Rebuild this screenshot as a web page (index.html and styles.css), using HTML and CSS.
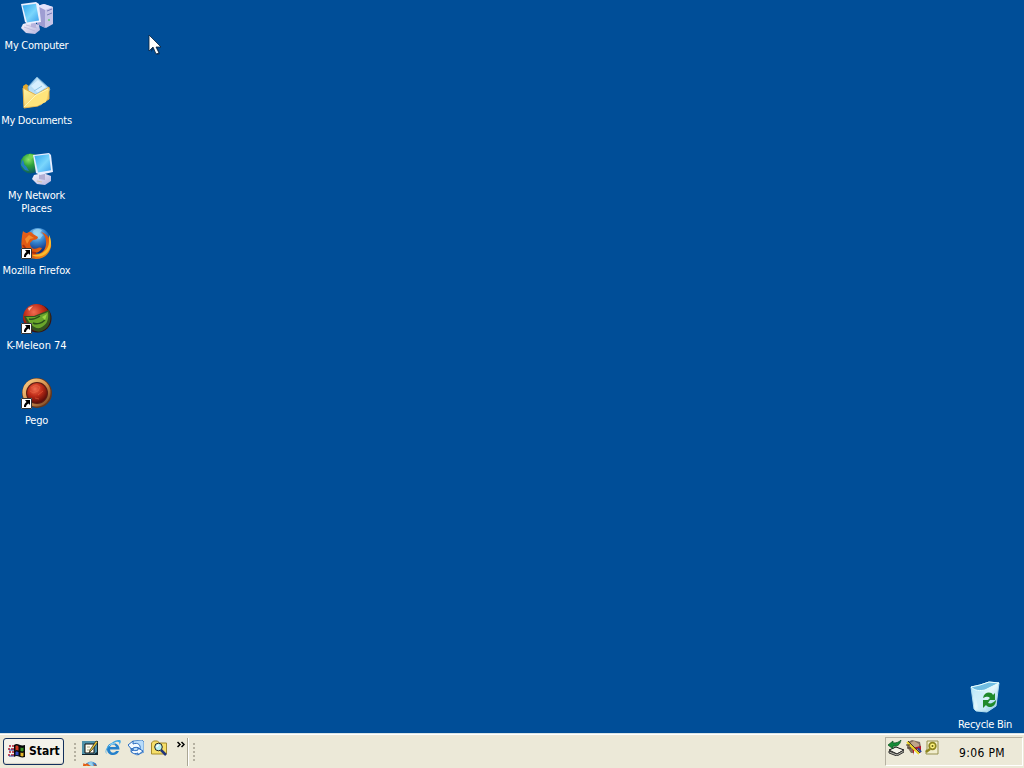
FILE: index.html
```html
<!DOCTYPE html>
<html lang="en">
<head>
<meta charset="utf-8">
<title>Desktop</title>
<link rel="stylesheet" href="styles.css">
</head>
<body>
<svg width="0" height="0" class="defs" aria-hidden="true">
<defs>
<linearGradient id="screen" x1="0" y1="0" x2="1" y2="1"><stop offset="0" stop-color="#2fa6ee"/><stop offset=".55" stop-color="#7ad6fc"/><stop offset="1" stop-color="#3ca0ec"/></linearGradient>
<linearGradient id="case" x1="0" y1="0" x2="1" y2="1"><stop offset="0" stop-color="#fbfaff"/><stop offset="1" stop-color="#b3b0dc"/></linearGradient>
<linearGradient id="folder" x1="0" y1="0" x2="1" y2="1"><stop offset="0" stop-color="#fff6a8"/><stop offset="1" stop-color="#f3c04c"/></linearGradient>
<radialGradient id="earth" cx=".4" cy=".3" r=".7"><stop offset="0" stop-color="#8be36b"/><stop offset=".45" stop-color="#2fa43b"/><stop offset="1" stop-color="#0b5c60"/></radialGradient>
<radialGradient id="ocean" cx=".45" cy=".25" r=".7"><stop offset="0" stop-color="#a8e2ff"/><stop offset=".5" stop-color="#3180cc"/><stop offset="1" stop-color="#112b78"/></radialGradient>
<linearGradient id="fox" x1="0" y1="0" x2="1" y2="1"><stop offset="0" stop-color="#e4601a"/><stop offset=".55" stop-color="#dc560f"/><stop offset="1" stop-color="#f59a20"/></linearGradient>
<radialGradient id="redball" cx=".4" cy=".3" r=".7"><stop offset="0" stop-color="#f06d50"/><stop offset=".5" stop-color="#bf2c18"/><stop offset="1" stop-color="#5d0c08"/></radialGradient>
<linearGradient id="gold" x1="0" y1="0" x2="1" y2="1"><stop offset="0" stop-color="#ffd68e"/><stop offset=".5" stop-color="#d89451"/><stop offset="1" stop-color="#69391d"/></linearGradient>
<linearGradient id="bin" x1="0" y1="0" x2="1" y2="1"><stop offset="0" stop-color="#a5dff8"/><stop offset=".5" stop-color="#e4f7fb"/><stop offset="1" stop-color="#82c6e8"/></linearGradient>
<symbol id="shortcut" viewBox="0 0 11 11"><path fill="#fff" d="M0 0h11v11H0z"/><path fill="none" stroke="#000" stroke-width=".8" d="M.5.5h10v10H.5z"/><path d="M4 2h5v5L7.500 5.500C6 6.500 5 7.500 5 9H3c-.3-2 .8-3.800 2.500-5z"/></symbol>
<symbol id="firefox" viewBox="0 0 32 32"><circle cx="18" cy="13.500" r="12.500" fill="url(#ocean)"/><path d="M13 4c3-3 7-2 9-1l-2 3 3 2-3 4-4-1-2-3z" fill="#9ad6ef" opacity=".75"/><path d="M3 4c1.500 1.500 3 2 4 2 3-2 5-1 6 1l5 3c0 2-2 3-5 3l-3 3c0 5 4 7 8 5 2-1 3 0 4 0-2 4-6 6-10 4 7 5 15-1 14-11-.3-4-2-7-5-9 7 2 11 9 10 15-2 8-8 12-15 12C6 31 .5 24 1.500 15 1.800 11 2 8 3 4z" fill="url(#fox)"/><path d="M29 8c4 7 2 16-5 20-4 2-9 2-12 0 9 1 17-5 17-13z" fill="#fabc2d"/><path d="M5 12l4-4 5 3-4 1-3 5z" fill="#f38c2c"/><path d="M3 18c3 5 7 8 13 8" stroke="#ae300c" stroke-width="2" fill="none"/></symbol>
</defs>
</svg>
<main class="desktop">
<div class="icons">
<div class="item"><svg class="icon" viewBox="0 0 32 32"><path d="M17 4l7-2 9 3v17l-7 4-9-4z" fill="#c6c4e8"/><path d="M17 4l7-2 9 3-8 3z" fill="#e6e4fb"/><path d="M17 4l8 4v18l-8-4z" fill="#9f9dd2"/><path d="M27 9l5-2M27 13l5-2" stroke="#7779b7"/><circle cx="29" cy="18" r="1" fill="#64c977"/><path d="M1 26l2-4 7-2 9 3 1 5-5 4-9-1z" fill="url(#case)"/><path d="M4 25l11 4M6 23l11 3" stroke="#b6b3d6" stroke-width=".7"/><path d="M11 20h5v6l-5-1z" fill="#b8b4dc"/><path d="M1 2L16 0l3 2 2 18-13 2-3-2z" fill="#edf1ff"/><path d="M2.500 3.500L16 1.800l3 16.700-12 2z" fill="url(#screen)"/></svg><span class="label my-computer">My Computer</span></div>
<div class="item"><svg class="icon" viewBox="0 0 32 32"><path d="M3 9l3-2 3 2 6 1v19L4 31z" fill="#e4a92d"/><path d="M8 10L17 0l13 12-9 16-11-2z" fill="#b7dcf4" stroke="#79b0d7"/><path d="M11 9l7-6 8 7-8 6z" fill="#d7effe"/><path d="M14 14l8-5M16 17l9-5" stroke="#8fc4e5"/><path d="M3 11l13 7L29 10v12L18 29 4 31z" fill="url(#folder)" stroke="#e3b04a"/><path d="M4 30l12-12 13-6-3 13-9 4z" fill="#ffe47b"/><path d="M4 30l12-12 12-6" fill="none" stroke="#fff7b7"/></svg><span class="label my-documents">My Documents</span></div>
<div class="item"><svg class="icon" viewBox="0 0 32 32"><circle cx="10.500" cy="11.500" r="10" fill="url(#earth)"/><path d="M2 8c3 1 1 5 4 6l3 5-4-1-4-5z" fill="#237ec0"/><path d="M9 2l6 1-3 4-4-1z" fill="#75d354"/><path d="M12 27l2-4 9-2 8 3v5l-6 4-8-1z" fill="url(#case)"/><path d="M19 20h6v8l-6-1z" fill="#b3afd3"/><path d="M13 3L29 1l2 2 2 17-13 3-4-2z" fill="#e5edff"/><path d="M14.500 4L29 2.200l2 16-13 2.300z" fill="url(#screen)"/><path d="M17 29l5 1" stroke="#d3c5a7"/></svg><span class="label my-network">My Network<br>Places</span></div>
<div class="item"><svg class="icon" viewBox="0 0 32 32"><use href="#firefox" width="32" height="32"/><use href="#shortcut" x="1" y="21" width="11" height="11"/></svg><span class="label firefox">Mozilla Firefox</span></div>
<div class="item"><svg class="icon" viewBox="0 0 32 32"><circle cx="17.500" cy="16.500" r="14" fill="#39100e"/><circle cx="16.500" cy="15.500" r="13.500" fill="url(#redball)"/><path d="M4 14l10 0 15-6c3 8 2 17-7 21-8 3-15-5-18-15z" fill="#335320"/><path d="M6 15l9 0 13-5c1 8-1 13-8 16-6 1-10-4-14-11z" fill="#69a52b"/><path d="M9 17c4 1 8-1 11-3m-7 7c4 2 9 0 12-3" fill="none" stroke="#294f1b" stroke-width="1.500"/><path d="M22 15l5-3-2 6z" fill="#9cd443"/><path d="M8 6l5-2-4 5z" fill="#ffb399"/><use href="#shortcut" x="1" y="21" width="11" height="11"/></svg><span class="label kmeleon">K-Meleon 74</span></div>
<div class="item"><svg class="icon" viewBox="0 0 32 32"><circle cx="17" cy="16" r="15" fill="#65371e"/><circle cx="16.500" cy="15.500" r="14" fill="url(#gold)"/><circle cx="17" cy="16" r="11" fill="#5b1c14"/><circle cx="17" cy="16" r="10" fill="url(#redball)"/><path d="M11 11l5-3 4 2-2 4-5 2-3-2m8 4l5-4m-8 7l4 1" stroke="#f06b46" fill="none" opacity=".5"/><use href="#shortcut" x="1" y="21" width="11" height="11"/></svg><span class="label pego">Pego</span></div>
</div>
<div class="item recycle"><svg class="icon" viewBox="0 0 32 32"><path d="M2 6l9-2 9-3 10 1-3 23-9 6-11-1-2-2z" fill="url(#bin)" stroke="#b0ddef"/><path d="M2 6c4 4 9 4 14 3l14-7-10-1-9 3z" fill="#70bde2" stroke="#e9ffff"/><path d="M6 11l3 16 8 2-2-17z" fill="#c9edf8" opacity=".7"/><path d="M14 17c1-6 8-7 10-3l2-2v7h-7l2-2c-2-2-4-1-7 0zM27 19c0 7-7 9-10 5l-3 3v-8h7l-2 3c3 1 5 0 8-3z" fill="#208a2b"/></svg><span class="label recycle-bin">Recycle Bin</span></div>
<svg class="cursor" viewBox="0 0 14 22"><path d="M3 4l10 9H9l3 7-3 1-3-6-3 3z" fill="#05264b" opacity=".65"/><path d="M1 1v16l4-4 3 7 3-1-3-6h5z" fill="#fff" stroke="#09213b" stroke-width=".8"/></svg>
</main>
<footer class="taskbar">
<button class="start"><svg class="flag" viewBox="0 0 18 16"><path d="M1 3h2m1 0h2M0 6h2m1 0h3M1 9h2m1 0h2M0 12h2m1 0h3" stroke="#b21b32" stroke-width="1.500"/><path d="M1 7h5M1 13h5" stroke="#2636a0"/><path d="M6 2c4-3 6 2 11 0v12c-5 2-7-3-11 0z" fill="#080808"/><path d="M7.500 3c2-1 2 0 3 .5v4c-1.500-.5-1.500-1-3 0z" fill="#d43b20"/><path d="M12.500 4.500c1.500.5 2 .5 3 0v3.500c-1 .5-1.500.5-3 0z" fill="#3a9627"/><path d="M7.500 9c1.500-1 2 0 3 0v3.500c-1-.5-1.500-1-3 0z" fill="#314bc4"/><path d="M12.500 9.500c1.500.5 2 .5 3 0V13c-1 .5-1.500.5-3 0z" fill="#e5b82a"/></svg><span>Start</span></button>
<div class="grip"></div>
<div class="launch">
<div class="quick">
<svg viewBox="0 0 16 16"><path d="M0 1h16v14H0z" fill="#11242c"/><path d="M0 1h15v11l-3 2H0z" fill="#4f91a9"/><path d="M3 4h9v9H3z" fill="#fffef2" stroke="#111"/><path d="M5 7h3m-3 3h3" stroke="#aaa782"/><path d="M8 10l6-9 2 1-6 8-3 3z" fill="#f0ca31" stroke="#222" stroke-width=".7"/></svg>
<svg viewBox="0 0 16 16"><path d="M14.500 9.500H5c.5 4 4.500 4 6 1.500h3C12 17 2 16.500 2 9 2 1 14.500.5 14.500 9.500zM5 7h6c-.5-3.500-5.500-3.500-6 0z" fill="#2581cb"/><path d="M2 14C-3 11 6 1 13 0c4-1 3 3 1 5 1-2 0-4-3-3C5 4-1 11 2 14z" fill="#42a9e5"/><path d="M4 6c2-2 4-3 6-2" stroke="#a2e4ff" fill="none"/></svg>
<svg viewBox="0 0 16 16"><path d="M5 1l9-1 2 2v10l-7 3-6-3V8z" fill="#b8dcfa" stroke="#5d92ce"/><path d="M0 5l5-4v3c5-2 8 1 7 5-2-2-4-2-7-1v3zM15 11l-5 4v-2c-5 2-8-1-6-5 1 3 3 3 6 2V8z" fill="#f3faff" stroke="#2769bd"/></svg>
<svg viewBox="0 0 16 16"><path d="M.5 3l2-2h4l2 2h7v11H.5z" fill="#f6df69" stroke="#a58c2b"/><circle cx="7.500" cy="7" r="3.800" fill="#b9f1ef" stroke="#222"/><path d="M10 10l5 5" stroke="#21357b" stroke-width="2.500"/><path d="M5.500 7l2-2" stroke="#fff" stroke-width="1.500"/></svg>
</div>
<div class="overflow"><svg viewBox="0 0 16 16"><use href="#firefox" width="16" height="16"/></svg></div>
</div>
<svg class="chevron" viewBox="0 0 8 7"><path d="M.5 1l2.500 2.500-2.500 2.500M4.500 1L7 3.500 4.500 6" fill="none" stroke="#000" stroke-width="1.500"/></svg>
<div class="divider"></div>
<div class="grip second"></div>
<div class="tray">
<div class="tray-icons">
<svg viewBox="0 0 16 16"><path d="M1 10l7-3 8 3-7 4z" fill="#f4f3ea" stroke="#111"/><path d="M1 11v2l8 3 7-4v-2l-7 4z" fill="#b9b9af" stroke="#333"/><path d="M0 5l5-4v2c4 0 6-1 8-3-1 5-4 7-8 6v3z" fill="#168c38" stroke="#0a4a1c" stroke-width=".7"/></svg>
<svg viewBox="0 0 16 16"><path d="M2 2l4-2 8 2 1 5-2 6H5L1 7z" fill="#806e60"/><path d="M4 3l4-2 5 3v4H7z" fill="#c0a589"/><path d="M6 8l9-2v9H8z" fill="#b5162b"/><path d="M8 11l3-2 4 4v2H8z" fill="#eee"/><path d="M12 8l3 4" stroke="#24469b" stroke-width="2"/><path d="M1 2l12 12" stroke="#edd426" stroke-width="2"/><path d="M2 1l12 12M0 5h4M1 8h4" stroke="#473b24"/></svg>
<svg viewBox="0 0 16 16"><path d="M3 1h11v13H2v-3l1-2z" fill="#f1edcd" stroke="#96914f"/><circle cx="8.500" cy="6" r="3.300" fill="#fff480" stroke="#8d851d" stroke-width="1.700"/><circle cx="8.500" cy="6" r="1" fill="#625f16"/><path d="M6 9l-4 3" stroke="#8e861d" stroke-width="2.500"/></svg>
</div>
<time>9:06 PM</time>
</div>
</footer>
</body>
</html>
```

FILE: styles.css
```css
* { box-sizing: border-box; }
body {
  margin: 0;
  width: 1024px;
  height: 768px;
  display: flex;
  flex-direction: column;
  overflow: hidden;
  background: #004e98;
  font-family: "DejaVu Sans Condensed", "DejaVu Sans", sans-serif;
  font-size: 11px;
  color: #000;
}
svg { display: block; flex-shrink: 0; }
.defs { position: absolute; }
.desktop {
  position: relative;
  height: 733px;
  display: flex;
  justify-content: space-between;
  align-items: flex-end;
}
.icons { align-self: flex-start; }
.item {
  width: 73px;
  height: 75px;
  padding-top: 2px;
  display: flex;
  flex-direction: column;
  align-items: center;
}
.icon { width: 32px; height: 32px; margin-right: 1px; overflow: visible; }
.label {
  margin-top: 5px;
  line-height: 13px;
  text-align: center;
  white-space: nowrap;
  color: #fff;
  letter-spacing: -.2px;
}
.my-computer, .my-documents, .recycle-bin { letter-spacing: -.27px; }
.firefox { letter-spacing: -.13px; }
.kmeleon { letter-spacing: -.05px; }
.recycle { width: 78px; height: 54px; }
.cursor {
  position: absolute;
  left: 148px;
  top: 34px;
  width: 14px;
  height: 22px;
}
.taskbar {
  height: 35px;
  display: flex;
  padding-top: 4px;
  background: #ece9d8;
  border-top: 1px solid #d9e4e5;
  box-shadow: inset 0 1px #fff;
}
.start {
  width: 61px;
  height: 27px;
  margin-left: 3px;
  padding: 0 3px 1px 4px;
  display: flex;
  align-items: center;
  gap: 3px;
  border: 1px solid #12305d;
  border-radius: 3px;
  background: #f3f2ea;
  box-shadow: inset 0 -1px 1px #d5d0c2;
  font: bold 12px "DejaVu Sans Condensed", "DejaVu Sans", sans-serif;
  letter-spacing: 0;
  color: #000;
}
.flag { width: 18px; height: 16px; }
.grip {
  width: 2px;
  height: 20px;
  margin: 5px 0 0 10px;
  background: repeating-linear-gradient(to bottom, #b5b1a1 0 2px, transparent 2px 4px);
}
.launch { width: 86px; margin-left: 6px; overflow: hidden; }
.quick { display: flex; gap: 7px; padding-top: 2px; }
.quick svg, .overflow svg, .tray-icons svg { width: 16px; height: 16px; }
.overflow { margin-top: 5px; height: 5px; overflow: hidden; }
.chevron { width: 8px; height: 7px; margin: 3px 0 0 9px; }
.divider {
  width: 2px;
  height: 28px;
  margin-left: 2px;
  border-left: 1px solid #aaa694;
  border-right: 1px solid #fff;
}
.second { margin-left: 4px; }
.tray {
  width: 138px;
  height: 29px;
  margin-top: -1px;
  margin-left: auto;
  margin-right: 1px;
  display: flex;
  border: 1px solid;
  border-color: #b5b1a1 #fff #fff #b5b1a1;
}
.tray-icons { display: flex; gap: 2px; padding: 2px 0 0 2px; }
.tray time { margin-left: 19px; font-size: 12px; line-height: 30px; letter-spacing: .35px; white-space: nowrap; }
```
